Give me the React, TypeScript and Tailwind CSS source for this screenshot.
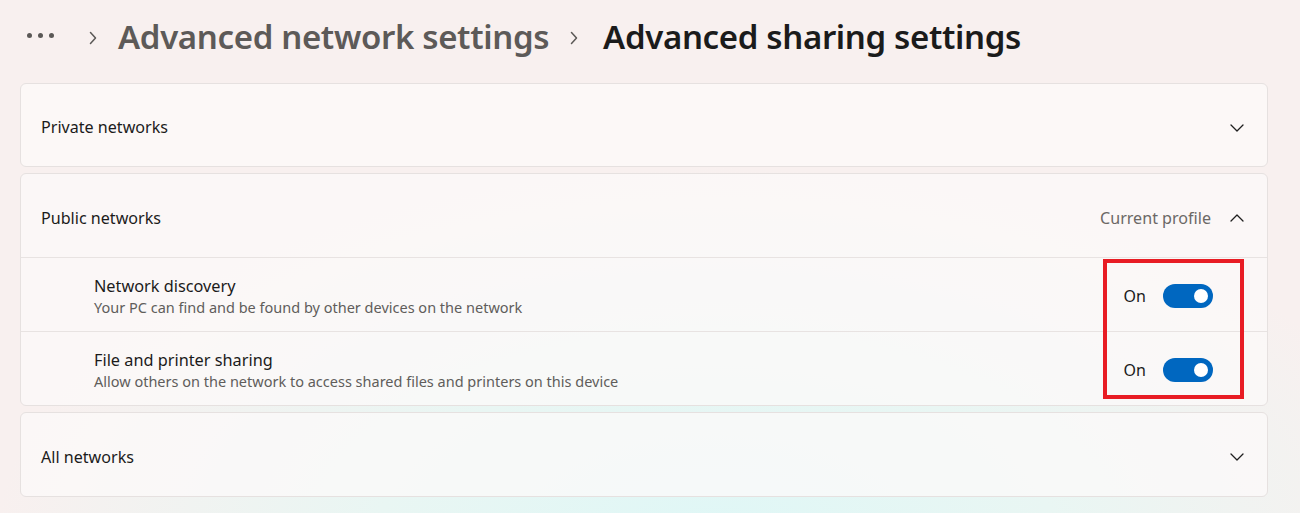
import React from "react";

const ChevronDown = () => (
  <svg width="14" height="8" viewBox="0 0 14 8" fill="none">
    <path d="M1 1l6 6 6-6" stroke="#1f1f1f" strokeWidth="1.3" strokeLinecap="round" strokeLinejoin="round" />
  </svg>
);
const ChevronUp = () => (
  <svg width="14" height="8" viewBox="0 0 14 8" fill="none">
    <path d="M1 7l6-6 6 6" stroke="#1f1f1f" strokeWidth="1.3" strokeLinecap="round" strokeLinejoin="round" />
  </svg>
);
const Crumb = () => (
  <svg width="8" height="14" viewBox="0 0 8 14" fill="none">
    <path d="M1.5 1.5l5 5.5-5 5.5" stroke="#5b5856" strokeWidth="1.5" strokeLinecap="round" strokeLinejoin="round" />
  </svg>
);

const Toggle = () => (
  <div className="flex items-center gap-[17px]">
    <span className="text-[16px] text-[#1b1b1b]">On</span>
    <div className="w-[50px] h-[24px] rounded-full bg-[#0067c0] flex items-center justify-end pr-[5px]">
      <div className="w-[14px] h-[14px] rounded-full bg-white" />
    </div>
  </div>
);

export default function App() {
  return (
    <div
      className="w-[1300px] h-[513px] overflow-hidden bg-[radial-gradient(ellipse_65%_85%_at_55%_105%,#dff7f6_0%,#e9f6f3_40%,#f8f0ef_85%)] text-[#1b1b1b]"
      style={{ fontFamily: '"Noto Sans", "Open Sans", sans-serif' }}
    >
      <div className="flex items-center h-[76px] pl-[27px] pb-[2px]">
        <div className="flex gap-[6px] mt-[-4px]">
          <div className="w-[5px] h-[5px] rounded-full bg-[#5b5856]" />
          <div className="w-[5px] h-[5px] rounded-full bg-[#5b5856]" />
          <div className="w-[5px] h-[5px] rounded-full bg-[#5b5856]" />
        </div>
        <div className="ml-[35px] mr-[21px] mt-[2px]"><Crumb /></div>
        <span className="text-[33px] font-semibold text-[#5d5a58] tracking-[-0.35px]">Advanced network settings</span>
        <div className="ml-[21px] mr-[25px] mt-[2px]"><Crumb /></div>
        <span className="text-[33px] font-semibold text-[#1b1b1b] tracking-[-0.35px]">Advanced sharing settings</span>
      </div>

      <div className="flex flex-col gap-[6px] px-[20px] pr-[32px] pt-[7px]">
        <div className="h-[84px] rounded-[6px] border border-[#e6e1e0] bg-[#fcfaf9]/80 flex items-center justify-between pl-[20px] pr-[23px] pt-[5px]">
          <span className="text-[16.1px]">Private networks</span>
          <ChevronDown />
        </div>

        <div className="relative rounded-[6px] border border-[#e6e1e0] bg-[#fcfaf9]/75">
          <div className="h-[84px] flex items-center justify-between pl-[20px] pr-[23px] pt-[5px] border-b border-[#e8e3e2]">
            <span className="text-[16.1px]">Public networks</span>
            <div className="flex items-center gap-[19px]">
              <span className="text-[16.1px] text-[#6b6866]">Current profile</span>
              <ChevronUp />
            </div>
          </div>
          <div className="h-[74px] flex items-center justify-between pl-[73px] pr-[54px] pt-[2px] border-b border-[#e8e3e2]">
            <div className="flex flex-col">
              <span className="text-[16.3px] leading-[22px]">Network discovery</span>
              <span className="text-[14.5px] leading-[20px] text-[#605d5b]">Your PC can find and be found by other devices on the network</span>
            </div>
            <Toggle />
          </div>
          <div className="h-[73px] flex items-center justify-between pl-[73px] pr-[54px] pt-[2px]">
            <div className="flex flex-col">
              <span className="text-[16.3px] leading-[22px]">File and printer sharing</span>
              <span className="text-[14.5px] leading-[20px] text-[#605d5b]">Allow others on the network to access shared files and printers on this device</span>
            </div>
            <Toggle />
          </div>
          <div className="absolute left-[1082px] top-[85px] w-[141px] h-[140px] border-[4px] border-[#e81c24]" />
        </div>

        <div className="h-[85px] rounded-[6px] border border-[#e6e1e0] bg-[#fcfaf9]/75 flex items-center justify-between pl-[20px] pr-[23px] pt-[5px]">
          <span className="text-[16.1px]">All networks</span>
          <ChevronDown />
        </div>
      </div>
    </div>
  );
}
